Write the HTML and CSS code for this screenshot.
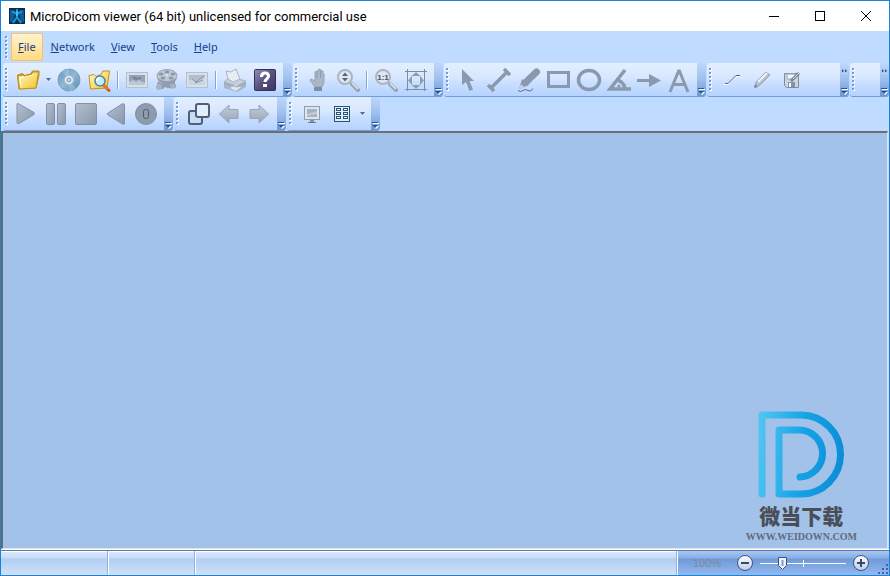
FILE: index.html
```html
<!DOCTYPE html>
<html lang="en">
<head>
  <meta charset="UTF-8" />
  <meta name="viewport" content="width=device-width, initial-scale=1" />
  <title>MicroDicom viewer</title>
  <link rel="stylesheet" href="styles.css">
</head>
<body>
  <!-- shared gradients -->
  <svg class="defs" width="0" height="0" aria-hidden="true">
    <defs>
      <linearGradient id="yellow" x1="0" y1="0" x2="1" y2="1">
        <stop offset="0" stop-color="#fffbd0"/><stop offset="1" stop-color="#f3c21c"/>
      </linearGradient>
      <linearGradient id="gray" x1="0" y1="0" x2="1" y2="1">
        <stop offset="0" stop-color="#b4c0cf"/><stop offset="1" stop-color="#8997ab"/>
      </linearGradient>
      <linearGradient id="silver" x1="0" y1="0" x2="0" y2="1">
        <stop offset="0" stop-color="#c3cdd9"/><stop offset="1" stop-color="#98a6b7"/>
      </linearGradient>
      <linearGradient id="disc" x1="0" y1="0" x2="1" y2="1">
        <stop offset="0" stop-color="#5f97bd"/><stop offset=".5" stop-color="#8fbad8"/><stop offset="1" stop-color="#5288b0"/>
      </linearGradient>
      <linearGradient id="purple" x1="0" y1="0" x2="1" y2="1">
        <stop offset="0" stop-color="#9490bd"/><stop offset=".5" stop-color="#56517f"/><stop offset="1" stop-color="#39345f"/>
      </linearGradient>
      <linearGradient id="knob" x1="0" y1="0" x2="0" y2="1">
        <stop offset="0" stop-color="#ffffff"/><stop offset="1" stop-color="#b9cdea"/>
      </linearGradient>
      <linearGradient id="brand" gradientUnits="userSpaceOnUse" x1="0" y1="40" x2="87" y2="50">
        <stop offset="0" stop-color="#50c3f2"/><stop offset=".5" stop-color="#15a3e6"/><stop offset="1" stop-color="#0d8bd6"/>
      </linearGradient>
    </defs>
  </svg>

  <div class="window">
    <header class="titlebar">
      <svg class="app-icon" width="16" height="16" viewBox="0 0 16 16">
        <rect width="16" height="16" fill="#0b2b4a"/>
        <path d="M1 2h4l1 4-2 8H1zM15 2h-4l-1 4 2 8h3z" fill="#0c5c9a"/>
        <path d="M8 1v9M3 4q4 0 5 3q1-3 5-3M8 9l-4 6M8 9l4 6" stroke="#1898dc" stroke-width="2" fill="none"/>
        <path d="M8 3v5" stroke="#7fd8f8"/>
      </svg>
      <h1>MicroDicom viewer (64 bit) unlicensed for commercial use</h1>
      <div class="window-buttons">
        <button aria-label="Minimize"><svg width="12" height="12" viewBox="0 0 12 12"><path d="M1 6.500h10" stroke="#000"/></svg></button>
        <button aria-label="Maximize"><svg width="12" height="12" viewBox="0 0 12 12"><rect x="1.500" y="1.500" width="9" height="9" fill="none" stroke="#000"/></svg></button>
        <button aria-label="Close"><svg width="12" height="12" viewBox="0 0 12 12"><path d="M1 1l10 10M11 1L1 11" stroke="#000"/></svg></button>
      </div>
    </header>

    <nav class="menubar">
      <span class="grip"></span>
      <button class="active"><u>F</u>ile</button>
      <button><u>N</u>etwork</button>
      <button><u>V</u>iew</button>
      <button><u>T</u>ools</button>
      <button><u>H</u>elp</button>
    </nav>

    <div class="toolbar-row">
      <div class="toolbar">
        <span class="grip"></span>
        <button class="tool" aria-label="Open"><svg viewBox="0 0 26 26">
          <path d="M4 22L2.500 8l5-1.500 2 2 6-1.500 2-3h6.500v4L21 21z" fill="#d9a520" stroke="#b98a1c"/>
          <path d="M4.500 22L3 9l5-1 2 2 6-2 2-3h5.500L21 21z" fill="url(#yellow)" stroke="#c3921a"/>
          <path d="M6 20L5 11l13-3" fill="none" stroke="#fffde0"/></svg></button>
        <button class="drop" aria-label="Open options"><svg viewBox="0 0 5 3"><path d="M0 0h5L2.500 3z"/></svg></button>
        <button class="tool" aria-label="Open CD"><svg viewBox="0 0 26 26">
          <circle cx="13" cy="13" r="11" fill="url(#disc)" stroke="#7f9fb5"/>
          <path d="M13 13L6 4.500Q9 2 13 2zM13 13l7 8.500q-3 2.500-7 2.500z" fill="#b5d5e8" opacity=".4"/>
          <circle cx="13" cy="13" r="4.500" fill="#e6edf4" stroke="#a9bccb"/><circle cx="13" cy="13" r="2" fill="#bcd4ea" stroke="#8298ac"/></svg></button>
        <button class="tool" aria-label="Scan for files"><svg viewBox="0 0 26 26">
          <path d="M4.500 22L3 8.500l5-1 2 2 5-2 2-3.500h6.500L21 21z" fill="url(#yellow)" stroke="#c3921a"/>
          <path d="M18 18.500l5 5" stroke="#d4592a" stroke-width="3" stroke-linecap="round"/><path d="M17.500 18l4 4" stroke="#f9a873"/>
          <circle cx="14" cy="14" r="5" fill="#c4e9fb" stroke="#4f86ad" stroke-width="1.500"/><path d="M11 14q0-3 3-3" stroke="#fff" fill="none" stroke-width="2"/></svg></button>
        <span class="sep"></span>
        <button class="tool" disabled aria-label="Export image"><svg viewBox="0 0 26 26">
          <rect x="2.500" y="5.500" width="21" height="15" fill="#d7dfe9" stroke="#b4c0ce"/><rect x="5" y="8" width="16" height="10" fill="#95a3b5"/>
          <path d="M5 15l4-2 3 2 3-2 6 3v2H5z" fill="#bbc7d4"/><path d="M8 10q3-1 5 1l4-1v2l-6 1z" fill="#74849a"/></svg></button>
        <button class="tool" disabled aria-label="Export video"><svg viewBox="0 0 26 26">
          <path d="M4 14q4 5 17 0v5q-4 4-10 1l-2 2H4l-1-4z" fill="#8f9daf"/>
          <ellipse cx="13" cy="10" rx="10" ry="7" fill="#8e9cae"/><ellipse cx="13" cy="8.500" rx="10" ry="6" fill="#c1cbd6" stroke="#96a4b5"/>
          <g fill="#8a98ab"><ellipse cx="13" cy="5" rx="2.500" ry="1.500"/><ellipse cx="7" cy="7" rx="2.500" ry="1.500"/><ellipse cx="19" cy="7" rx="2.500" ry="1.500"/><ellipse cx="9" cy="11" rx="2.500" ry="1.500"/><ellipse cx="17" cy="11" rx="2.500" ry="1.500"/></g>
          <circle cx="13" cy="8" r="1" fill="#e5ebf2"/><ellipse cx="5" cy="20" rx="3" ry="3" fill="#a8b4c3"/><path d="M16 17h6v4l-5 1z" fill="#a5b2c2"/></svg></button>
        <button class="tool" disabled aria-label="Copy image"><svg viewBox="0 0 26 26">
          <rect x="2.500" y="5.500" width="21" height="15" fill="#d7dfe9" stroke="#b4c0ce"/><rect x="5" y="8" width="16" height="10" fill="#b3becc"/>
          <path d="M5 13l4-1 3 3 9-5v8H5z" fill="#cbd4df"/><path d="M8 12l4 3 8-6M11 16l8-3" fill="none" stroke="#8593a6"/></svg></button>
        <span class="sep"></span>
        <button class="tool" disabled aria-label="Print"><svg viewBox="0 0 26 26">
          <path d="M2 15l6-5 16 4v6l-9 5-13-4z" fill="#a8b5c4"/><path d="M2 15l6-5 16 4-9 5z" fill="#c6d0dc" stroke="#a9b5c4"/>
          <path d="M6 12L4 4l5 1 5-3 4 10-7 3z" fill="#e7edf5" stroke="#a9b5c4"/><path d="M8 21l5-3 6 2-5 4z" fill="#e0e7ef"/><path d="M2 16l13 4 9-4" fill="none" stroke="#96a4b5"/></svg></button>
        <button class="tool" aria-label="Help"><svg viewBox="0 0 26 26">
          <rect x="2.500" y="2.500" width="21" height="21" rx="1" fill="url(#purple)" stroke="#343057"/>
          <path d="M9.500 10q0-4 3.500-4t3.500 3c0 3-3.500 3-3.500 6" fill="none" stroke="#fff" stroke-width="3"/><rect x="11" y="17" width="4" height="3" fill="#fff"/></svg></button>
        <button class="cap" aria-label="Toolbar options"><svg viewBox="0 0 7 7"><path class="lit" d="M1 1h6v1H1zM1 4h6L4 7z"/><path d="M0 0h6v1H0zM0 3h6L3 6z"/></svg></button>
      </div>

      <div class="toolbar">
        <span class="grip"></span>
        <button class="tool" disabled aria-label="Pan"><svg viewBox="0 0 26 26">
          <path d="M10 20l-5-7 1-1 4 2V5l1-1 2 1V3l2-1 1 2h2v2l1 1v8l-2 5z" fill="#aab6c5" stroke="#94a2b4"/><path d="M12 5v6M15.500 4v7" stroke="#8c9bae"/>
          <rect x="9" y="20" width="8" height="4" rx="1" fill="#7e8da1"/></svg></button>
        <button class="tool" disabled aria-label="Zoom"><svg viewBox="0 0 26 26">
          <path d="M17 17l6 6" stroke="#94a2b3" stroke-width="4" stroke-linecap="round"/><path d="M17 16l6 6" stroke="#d2dae4" stroke-width="2"/>
          <circle cx="10" cy="10" r="7" fill="#dfe6ef" stroke="#a9b5c5" stroke-width="2"/><path d="M7 9h6l-3-3.500zM7 11h6l-3 3.500z" fill="#55647a"/></svg></button>
        <span class="sep"></span>
        <button class="tool" disabled aria-label="Actual size"><svg viewBox="0 0 26 26">
          <path d="M17 17l6 6" stroke="#94a2b3" stroke-width="4" stroke-linecap="round"/><path d="M17 16l6 6" stroke="#d2dae4" stroke-width="2"/>
          <circle cx="10" cy="10" r="7" fill="#dfe6ef" stroke="#a9b5c5" stroke-width="2"/><text x="10" y="13" text-anchor="middle" class="ratio">1:1</text></svg></button>
        <button class="tool" disabled aria-label="Fit to window"><svg viewBox="0 0 26 26">
          <path d="M2 4.500h22M2 22.500h22M4.500 2v22M21.500 2v22" stroke="#7c8ca1"/><circle cx="13" cy="13.500" r="6" fill="none" stroke="#9aa8ba"/>
          <path d="M13 5l4 4H9zM13 22l4-4H9zM5 13.500l4-4v8zM21 13.500l-4-4v8z" fill="#8e9db0"/></svg></button>
        <button class="cap" aria-label="Toolbar options"><svg viewBox="0 0 7 7"><path class="lit" d="M1 1h6v1H1zM1 4h6L4 7z"/><path d="M0 0h6v1H0zM0 3h6L3 6z"/></svg></button>
      </div>

      <div class="toolbar">
        <span class="grip"></span>
        <button class="tool" disabled aria-label="Select"><svg viewBox="0 0 26 26"><path d="M6 2v16l4-3 3.500 9 3.500-1.500-3.500-8.500H18z" fill="#8a99ad"/></svg></button>
        <button class="tool" disabled aria-label="Measure length"><svg viewBox="0 0 26 26"><path d="M5 21L21 5M2 18l6 6M18 2l6 6" stroke="#8a99ad" stroke-width="3.500"/></svg></button>
        <button class="tool" disabled aria-label="Freehand"><svg viewBox="0 0 26 26">
          <path d="M10 15L20.500 5" stroke="#8a99ad" stroke-width="7" stroke-linecap="round"/><path d="M3 22l3-10 7 6z" fill="#8a99ad"/><path d="M3 22l2-5 3 3z" fill="#c8d2dd"/>
          <path d="M2 23.500q3 2 5 0t5 0 5-2" fill="none" stroke="#5f6c7d"/></svg></button>
        <button class="tool" disabled aria-label="Rectangle"><svg viewBox="0 0 26 26"><rect x="2.500" y="5.500" width="20" height="14" fill="none" stroke="#8a99ad" stroke-width="3"/></svg></button>
        <button class="tool" disabled aria-label="Ellipse"><svg viewBox="0 0 26 26"><ellipse cx="13" cy="13" rx="10.500" ry="9.500" fill="none" stroke="#8a99ad" stroke-width="3.500"/></svg></button>
        <button class="tool" disabled aria-label="Angle"><svg viewBox="0 0 26 26"><path d="M19 3L4 22h21M10 13q8 1 9 9" fill="none" stroke="#8a99ad" stroke-width="3.500"/><circle cx="13" cy="19" r="1.500" fill="#8a99ad"/></svg></button>
        <button class="tool" disabled aria-label="Arrow"><svg viewBox="0 0 26 26"><path d="M1 12h12V7l12 6.500L13 20v-5H1z" fill="#8a99ad"/></svg></button>
        <button class="tool" disabled aria-label="Text annotation"><svg viewBox="0 0 26 26"><path d="M4 25L13 3l9 22M8 17.500h10" fill="none" stroke="#8a99ad" stroke-width="3" stroke-linejoin="bevel"/></svg></button>
        <button class="cap" aria-label="Toolbar options"><svg viewBox="0 0 7 7"><path class="lit" d="M1 1h6v1H1zM1 4h6L4 7z"/><path d="M0 0h6v1H0zM0 3h6L3 6z"/></svg></button>
      </div>

      <div class="toolbar grow">
        <span class="grip"></span>
        <button class="tool" disabled aria-label="Line style"><svg viewBox="0 0 26 26"><path d="M5 17.500h4l8-8h4" fill="none" stroke="#fff"/><path d="M6 16.500h3l8-8h4" fill="none" stroke="#55637a"/></svg></button>
        <button class="tool" disabled aria-label="Edit"><svg viewBox="0 0 26 26">
          <path d="M6 20l1-5L17 5l4 3-10 10z" fill="#b4c0ce" stroke="#93a1b3"/><path d="M9 15l9-9" stroke="#f0f4f8" stroke-width="2"/><path d="M5 21l1-4 3 3z" fill="#77869a"/></svg></button>
        <button class="tool" disabled aria-label="Save annotations"><svg viewBox="0 0 26 26">
          <path d="M5.500 6.500h14v14h-12l-2-2z" fill="#ccd6e2" stroke="#7c8ba0"/><path d="M8 7h8v5H8z" fill="#f0f4f9" stroke="#9ba8b8"/><path d="M9 15h7v5H9z" fill="#8392a6"/><path d="M10 16h2v4h-2z" fill="#fff"/>
          <path d="M12 14l8-8" stroke="#75849a" stroke-width="3"/><path d="M14 12l6-6" stroke="#dbe3ec"/></svg></button>
        <button class="cap more" aria-label="More buttons"><svg viewBox="0 0 7 5"><path class="lit" d="M1 1v4l2-2zM4 1v4l2-2z"/><path d="M1 0v4l2-2zM4 0v4l2-2z"/></svg><svg viewBox="0 0 7 7"><path class="lit" d="M1 1h6v1H1zM1 4h6L4 7z"/><path d="M0 0h6v1H0zM0 3h6L3 6z"/></svg></button>
      </div>

      <div class="toolbar stub">
        <span class="grip"></span>
        <button class="cap more" aria-label="More buttons"><svg viewBox="0 0 7 5"><path class="lit" d="M1 1v4l2-2zM4 1v4l2-2z"/><path d="M1 0v4l2-2zM4 0v4l2-2z"/></svg><svg viewBox="0 0 7 7"><path class="lit" d="M1 1h6v1H1zM1 4h6L4 7z"/><path d="M0 0h6v1H0zM0 3h6L3 6z"/></svg></button>
      </div>
    </div>

    <div class="toolbar-row">
      <div class="toolbar playback">
        <span class="grip"></span>
        <button class="tool" disabled aria-label="Play"><svg viewBox="0 0 26 26"><path d="M5 2.500q-1 0-1 1v18q0 2 2 1l15-9q1-1 0-2L6 3z" fill="url(#gray)" stroke="#8291a6"/></svg></button>
        <button class="tool" disabled aria-label="Pause"><svg viewBox="0 0 26 26"><rect x="3.500" y="2.500" width="8" height="21" rx="1.500" fill="url(#gray)" stroke="#8291a6"/><rect x="14.500" y="2.500" width="8" height="21" rx="1.500" fill="url(#gray)" stroke="#8291a6"/></svg></button>
        <button class="tool" disabled aria-label="Stop"><svg viewBox="0 0 26 26"><rect x="2.500" y="2.500" width="21" height="21" rx="1.500" fill="url(#gray)" stroke="#8291a6"/></svg></button>
        <button class="tool" disabled aria-label="Play backward"><svg viewBox="0 0 26 26"><path d="M21.500 4v18q0 2-2 1L5 14q-1-1 0-2l14-9q2-1 2.500 1z" fill="url(#gray)" stroke="#8291a6"/></svg></button>
        <button class="tool" disabled aria-label="Frame rate"><svg viewBox="0 0 26 26"><circle cx="13" cy="13" r="10.500" fill="#8d9bae" stroke="#8291a6"/><rect x="10.500" y="8.500" width="5" height="9" rx="2" fill="none" stroke="#4b5a70"/></svg></button>
        <button class="cap" aria-label="Toolbar options"><svg viewBox="0 0 7 7"><path class="lit" d="M1 1h6v1H1zM1 4h6L4 7z"/><path d="M0 0h6v1H0zM0 3h6L3 6z"/></svg></button>
      </div>

      <div class="toolbar">
        <span class="grip"></span>
        <button class="tool" aria-label="Synchronize"><svg viewBox="0 0 26 26"><rect x="3" y="10" width="13" height="13" rx="2" fill="#c9dcf6" stroke="#4e6078" stroke-width="2"/><rect x="10" y="3" width="13" height="13" rx="2" fill="#e3edfb" stroke="#4e6078" stroke-width="2"/></svg></button>
        <button class="tool" disabled aria-label="Previous"><svg viewBox="0 0 26 26"><path d="M3.500 13L13 4v4.500h9v9h-9V22z" fill="url(#silver)" stroke="#96a4b5"/></svg></button>
        <button class="tool" disabled aria-label="Next"><svg viewBox="0 0 26 26"><path d="M22.500 13L13 4v4.500H4v9h9V22z" fill="url(#silver)" stroke="#96a4b5"/></svg></button>
        <button class="cap" aria-label="Toolbar options"><svg viewBox="0 0 7 7"><path class="lit" d="M1 1h6v1H1zM1 4h6L4 7z"/><path d="M0 0h6v1H0zM0 3h6L3 6z"/></svg></button>
      </div>

      <div class="toolbar">
        <span class="grip"></span>
        <button class="tool" disabled aria-label="Full screen"><svg viewBox="0 0 26 26"><rect x="5.500" y="5.500" width="15" height="13" fill="#dde5ee" stroke="#8f9daf"/><rect x="8" y="8" width="10" height="8" fill="#a5b2c2"/><path d="M8 13l10-3v3l-10 2z" fill="#c0cad6"/><path d="M11 19h4v2h-4z" fill="#8492a6"/><path d="M9 21.500h8" stroke="#66758a"/></svg></button>
        <button class="tool" aria-label="Window layout"><svg viewBox="0 0 26 26"><rect x="5.500" y="5.500" width="15" height="15" fill="#d4f3fb" stroke="#2b5078"/>
          <g fill="#fff" stroke="#2b5078"><rect x="7.500" y="7.500" width="4" height="2"/><rect x="14.500" y="7.500" width="4" height="2"/><rect x="7.500" y="11.500" width="4" height="2"/><rect x="14.500" y="11.500" width="4" height="2"/><rect x="7.500" y="15.500" width="4" height="2"/><rect x="14.500" y="15.500" width="4" height="2"/></g></svg></button>
        <button class="drop" aria-label="Layout options"><svg viewBox="0 0 5 3"><path d="M0 0h5L2.500 3z"/></svg></button>
        <button class="cap" aria-label="Toolbar options"><svg viewBox="0 0 7 7"><path class="lit" d="M1 1h6v1H1zM1 4h6L4 7z"/><path d="M0 0h6v1H0zM0 3h6L3 6z"/></svg></button>
      </div>
    </div>

    <main class="workspace">
      <div class="brand">
        <svg width="87" height="87" viewBox="0 0 87 87"><path d="M4 83V4h39a39 39 0 0 1 0 79H21V19h19a23 23 0 0 1 2 47" fill="none" stroke="url(#brand)" stroke-width="7" stroke-linecap="round" stroke-linejoin="round"/></svg>
        <strong lang="zh">微当下载</strong>
        <span>WWW.WEIDOWN.COM</span>
      </div>
    </main>

    <footer class="statusbar">
      <div class="pane first"></div>
      <div class="pane second"></div>
      <div class="pane rest"></div>
      <div class="zoom">
        <label for="zoom">100%</label>
        <button aria-label="Zoom out"><svg width="18" height="18" viewBox="0 0 18 18"><circle cx="9" cy="9" r="7.500" fill="url(#knob)" stroke="#39557f"/><path d="M5 9h8" stroke="#3a4a63" stroke-width="2"/></svg></button>
        <input type="range" id="zoom" min="0" max="100" value="23">
        <button aria-label="Zoom in"><svg width="18" height="18" viewBox="0 0 18 18"><circle cx="9" cy="9" r="7.500" fill="url(#knob)" stroke="#39557f"/><path d="M5 9h8M9 5v8" stroke="#3a4a63" stroke-width="2"/></svg></button>
        <svg class="sizer" width="12" height="12" viewBox="0 0 12 12"><path d="M9 1h2v2H9zM5 5h2v2H5zM9 5h2v2H9zM1 9h2v2H1zM5 9h2v2H5zM9 9h2v2H9z" fill="#3d64a0"/></svg>
      </div>
    </footer>
  </div>
</body>
</html>
```
FILE: styles.css
```css
* {
  box-sizing: border-box;
}
body {
  margin: 0;
  font-family: "Noto Sans", "Open Sans", sans-serif;
  font-size: 11px;
  color: #15428b;
}
.defs {
  position: absolute;
}
button {
  font: inherit;
  color: inherit;
  background: none;
  border: none;
  padding: 0;
  margin: 0;
}
svg {
  display: block;
}
.window {
  display: flex;
  flex-direction: column;
  height: 100vh;
  border: 1px solid #1883d7;
  background: #bfdbff;
}

/* title bar */
.titlebar {
  display: flex;
  align-items: center;
  height: 30px;
  padding-left: 8px;
  background: #fff;
}
.titlebar h1 {
  flex: 1;
  margin: 0 0 0 5px;
  font-family: Roboto, "Noto Sans", sans-serif;
  font-size: 13px;
  font-weight: normal;
  color: #000;
}
.window-buttons {
  display: flex;
}
.window-buttons button {
  display: flex;
  align-items: center;
  justify-content: center;
  width: 46px;
  height: 30px;
}

/* menu */
.menubar {
  display: flex;
  align-items: center;
  height: 32px;
  padding-left: 2px;
}
.menubar .grip {
  width: 8px;
}
.menubar button {
  height: 28px;
  padding: 0 7px 2px;
  border: 1px solid transparent;
  border-radius: 2px;
}
.menubar button.active {
  padding: 0 6px 2px;
  border-color: #ffbd69;
  background: linear-gradient(#fff3cf, #ffe7a6 50%, #ffd983);
}

/* toolbars */
.toolbar-row {
  display: flex;
  gap: 1px;
  height: 34px;
  padding-left: 2px;
}
.toolbar {
  display: flex;
  align-items: center;
  flex: none;
  border-bottom: 1px solid #6f9dd9;
  border-radius: 3px;
  background: linear-gradient(#e3efff, #d8e7ff 45%, #c9dfff 60%, #b5d3ff);
}
.toolbar.grow {
  flex: 1;
}
.toolbar.stub {
  width: 39px;
}
.grip {
  width: 10px;
  height: 23px;
  background:
    repeating-linear-gradient(#6f9dd9 0 2px, transparent 2px 4px) 2px 0 / 2px 22px no-repeat,
    repeating-linear-gradient(#fff 0 2px, transparent 2px 4px) 3px 1px / 2px 22px no-repeat;
}
.playback .grip {
  width: 8px;
}
.tool {
  display: flex;
  align-items: center;
  justify-content: center;
  width: 30px;
  height: 32px;
}
.tool svg {
  width: 26px;
  height: 26px;
}
.ratio {
  font: bold 8px "Liberation Sans", sans-serif;
  fill: #44546b;
}
.drop {
  display: flex;
  align-items: center;
  justify-content: center;
  width: 11px;
  height: 32px;
}
.drop svg {
  width: 5px;
  height: 3px;
  fill: #3f6ca8;
}
.sep {
  width: 2px;
  height: 18px;
  margin: 0 3px;
  border-left: 1px solid #7da7dc;
  background: #fff;
}
.cap {
  display: flex;
  flex-direction: column;
  justify-content: flex-end;
  align-items: center;
  align-self: stretch;
  width: 9px;
  margin-left: auto;
  padding: 6px 0 1px;
  border-radius: 0 3px 3px 0;
  background: linear-gradient(#bdd7fb, #9dbfee 50%, #6b98d5);
}
.tool + .cap,
.drop + .cap {
  margin-left: 3px;
}
.grow .tool + .cap {
  margin-left: auto;
}
.cap.more {
  justify-content: space-between;
}
.cap svg {
  width: 7px;
  fill: #2a5694;
}
.cap .lit {
  fill: #fff;
}

/* image area */
.workspace {
  position: relative;
  flex: 1;
  margin-right: 1px;
  border: 2px solid #696969;
  border-top-color: #6d6f74;
  border-right: 1px solid #e3e3e3;
  border-bottom: 1px solid #e3e3e3;
  background: #a3c2ea;
}
.brand {
  position: absolute;
  right: 30px;
  bottom: 4px;
  display: flex;
  flex-direction: column;
  align-items: center;
  color: #4a4f57;
}
.brand svg {
  margin-bottom: 2px;
}
.brand strong {
  font: 900 21px/30px "Noto Sans CJK SC", sans-serif;
}
.brand span {
  font: bold 10px/14px "Liberation Serif", serif;
  color: #616b7b;
}

/* status bar */
.statusbar {
  display: flex;
  height: 25px;
  margin-top: 1px;
  border-top: 1px solid #567db0;
  box-shadow: 0 -1px #fff;
  background: linear-gradient(#fff 0 1px, #d9e7fa 1px, #c8dcf7 7px, #b0cdf3 8px, #d0e1f9);
}
.pane {
  border-right: 1px solid #fff;
  box-shadow: inset -1px 0 #8fb2e0;
}
.pane.first {
  width: 108px;
}
.pane.second {
  width: 87px;
}
.pane.rest {
  flex: 1;
}
.zoom {
  display: flex;
  align-items: center;
  width: 211px;
  padding-left: 15px;
  background: linear-gradient(#a9c7f2, #88aee6 7px, #6f9ad8 8px, #93b8ef);
}
.zoom label {
  width: 43px;
  font-family: "Liberation Sans", sans-serif;
  color: #7d8896;
}
.zoom input {
  width: 86px;
  height: 18px;
  margin: 0 6px;
  appearance: none;
  background:
    linear-gradient(#fff, #fff) 0 9px / 86px 1px no-repeat,
    linear-gradient(#fff, #fff) 43px 6px / 1px 7px no-repeat;
}
.zoom input::-webkit-slider-thumb {
  appearance: none;
  width: 9px;
  height: 13px;
  background: url("data:image/svg+xml,%3Csvg xmlns='http://www.w3.org/2000/svg' viewBox='0 0 9 13'%3E%3Cpath d='M.5 .5h8v8l-4 4-4-4z' fill='%23eef4fd' stroke='%2339557f'/%3E%3Cpath d='M4.500 3v6' stroke='%237b9bc8' stroke-width='2'/%3E%3C/svg%3E");
}
.sizer {
  align-self: flex-end;
  margin-left: auto;
}
```
